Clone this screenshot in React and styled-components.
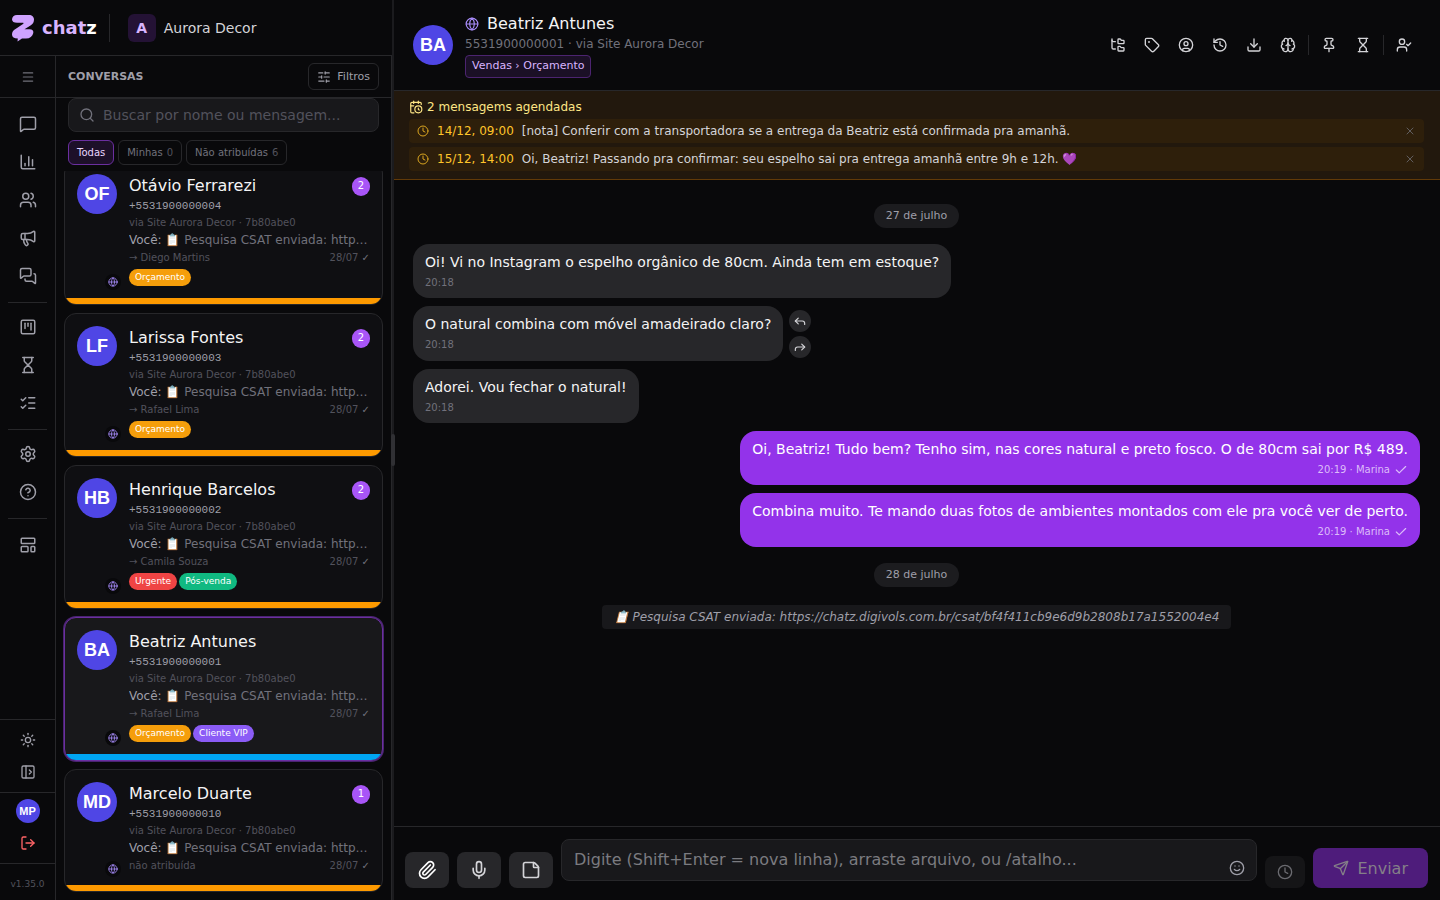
import React from "react";
import styled, { createGlobalStyle, css } from "styled-components";
import {
  Brain,
  CalendarClock,
  ChartColumn,
  Check,
  CircleHelp,
  CircleUser,
  Clock,
  Download,
  FolderTree,
  Forward,
  Globe,
  History,
  Hourglass,
  LayoutTemplate,
  ListChecks,
  LogOut,
  Megaphone,
  Menu,
  MessageSquare,
  MessagesSquare,
  Mic,
  PanelLeftOpen,
  Paperclip,
  Pin,
  Reply,
  Search,
  Send,
  Settings,
  SlidersHorizontal,
  Smile,
  SquareKanban,
  StickyNote,
  Sun,
  Tag,
  UserCheck,
  Users,
  X,
} from "lucide-react";

const colors = {
  bg: "#09090b",
  card: "#0f0f12",
  cardActive: "#18181b",
  line: "#27272a",
  text: "#f4f4f5",
  soft: "#d4d4d8",
  muted: "#9f9fa9",
  dim: "#71717b",
  faint: "#52525c",
  purple: "#9333ea",
  indigo: "#4f46e5",
  orange: "#fe9a00",
  blue: "#00a6f4",
};

const GlobalStyle = createGlobalStyle`
  * {
    box-sizing: border-box;
  }

  body {
    margin: 0;
    background: ${colors.bg};
    color: ${colors.text};
    font-family: "DejaVu Sans", sans-serif;
    font-size: 14px;
    line-height: 20px;
  }

  button,
  input,
  textarea {
    font-family: inherit;
    color: inherit;
    margin: 0;
  }

  button {
    display: flex;
    align-items: center;
    justify-content: center;
    padding: 0;
    border: 0;
    background: none;
    cursor: pointer;
  }

  a {
    color: inherit;
    text-decoration: none;
  }

  h1, h2, p, ul {
    margin: 0;
    padding: 0;
    font-size: inherit;
    font-weight: normal;
  }

  svg {
    flex-shrink: 0;
  }
`;

const ellipsis = css`
  overflow: hidden;
  white-space: nowrap;
  text-overflow: ellipsis;
`;

const Page = styled.div`
  display: flex;
  height: 100vh;
`;

const Sidebar = styled.div`
  display: flex;
  flex-direction: column;
  flex: 0 0 392px;
  min-width: 0;
`;

const BrandBar = styled.header`
  display: flex;
  align-items: center;
  flex: 0 0 56px;
  padding: 0 12px;
  border-bottom: 1px solid ${colors.line};
`;

const Brand = styled.a`
  display: flex;
  align-items: center;
  gap: 8px;
  padding-right: 12px;
  margin-right: 18px;
  height: 28px;
  border-right: 1px solid ${colors.line};
  font-size: 18px;
  font-weight: bold;
  color: #d8b4fe;

  b {
    color: #fff;
  }
`;

const OrgBadge = styled.span`
  display: flex;
  align-items: center;
  justify-content: center;
  width: 28px;
  height: 28px;
  margin-right: 8px;
  border-radius: 6px;
  background: #241235;
  color: #d8b4fe;
  font-weight: bold;
`;

const OrgName = styled.span`
  color: ${colors.soft};
`;

const SidebarBody = styled.div`
  display: flex;
  flex: 1;
  min-height: 0;
`;

const Rail = styled.nav`
  display: flex;
  flex-direction: column;
  flex: 0 0 56px;
  border-right: 1px solid ${colors.line};
  color: ${colors.muted};
`;

const RailToggle = styled.button`
  height: 42px;
  border-bottom: 1px solid ${colors.line};
  color: ${colors.dim};
`;

const RailScroll = styled.div`
  flex: 1;
  padding: 2px 8px;
`;

const RailGroup = styled.div`
  display: flex;
  flex-direction: column;
  gap: 2px;
  padding: 6px 0 8px;

  & + & {
    border-top: 1px solid ${colors.line};
  }

  &:last-child {
    padding-top: 8px;
  }
`;

const RailLink = styled.a`
  display: flex;
  align-items: center;
  justify-content: center;
  height: 36px;
  border-radius: 8px;
`;

const RailFooter = styled.div`
  display: flex;
  flex-direction: column;
  align-items: center;
  gap: ${({ $gap = 0 }) => $gap}px;
  padding: ${({ $top = 4 }) => $top}px 0 4px;
  border-top: 1px solid ${colors.line};
`;

const RailButton = styled.button`
  width: 32px;
  height: 32px;
  color: ${({ $danger }) => ($danger ? "#ff6467" : "inherit")};
`;

const Version = styled.div`
  height: 37px;
  border-top: 1px solid ${colors.line};
  color: ${colors.faint};
  font-size: 9px;
  line-height: 40px;
  text-align: center;
`;

const Avatar = styled.div`
  display: flex;
  align-items: center;
  justify-content: center;
  flex-shrink: 0;
  width: ${({ $size = 40 }) => $size}px;
  height: ${({ $size = 40 }) => $size}px;
  border-radius: 50%;
  background: ${colors.indigo};
  color: #fff;
  font-family: "Liberation Sans", sans-serif;
  font-size: ${({ $size = 40 }) => ($size < 40 ? 11 : 18)}px;
  font-weight: bold;
`;

const ListPane = styled.section`
  display: flex;
  flex-direction: column;
  flex: 1;
  min-width: 0;
  border-right: 1px solid ${colors.line};
`;

const ListHeader = styled.div`
  display: flex;
  align-items: center;
  justify-content: space-between;
  flex: 0 0 42px;
  padding: 0 12px;
  border-bottom: 1px solid ${colors.line};
`;

const ListTitle = styled.h2`
  color: ${colors.muted};
  font-size: 11px;
  font-weight: bold;
  text-transform: uppercase;
`;

const FilterButton = styled.button`
  gap: 6px;
  height: 27px;
  padding: 0 8px;
  border: 1px solid ${colors.line};
  border-radius: 6px;
  color: ${colors.muted};
  font-size: 11px;
`;

const SearchBox = styled.label`
  display: flex;
  align-items: center;
  gap: 8px;
  flex: 0 0 34px;
  margin: 0 12px;
  padding: 0 10px;
  border: 1px solid ${colors.line};
  border-radius: 8px;
  background: ${colors.cardActive};
  color: ${colors.dim};

  input {
    flex: 1;
    min-width: 0;
    padding: 0;
    border: 0;
    outline: 0;
    background: none;
    font-size: 14px;
  }

  input::placeholder {
    color: ${colors.faint};
  }
`;

const Tabs = styled.div`
  display: flex;
  gap: 4px;
  padding: 8px 12px 6px;
`;

const TabButton = styled.button`
  gap: 4px;
  height: 25px;
  padding: 0 8px;
  border: 1px solid ${({ $active }) => ($active ? "#6b2fa0" : colors.line)};
  border-radius: 6px;
  background: ${({ $active }) => ($active ? "#1d1029" : "transparent")};
  color: ${({ $active }) => ($active ? "#e9d5ff" : colors.dim)};
  font-size: 10px;

  span {
    color: ${colors.faint};
  }
`;

// the list is scrolled to its end
const CardList = styled.div`
  display: flex;
  flex-direction: column;
  justify-content: flex-end;
  gap: 8px;
  flex: 1;
  min-height: 0;
  padding: 0 8px 8px;
  overflow: hidden;
`;

const Card = styled.article`
  flex-shrink: 0;
  overflow: hidden;
  border: 1px solid ${({ $active }) => ($active ? "#6b2fa0" : colors.line)};
  border-radius: 12px;
  background: ${({ $active }) => ($active ? colors.cardActive : colors.card)};
  box-shadow: ${({ $active }) => ($active ? "0 0 0 1px #4a2470" : "none")};
`;

const CardBody = styled.div`
  display: flex;
  gap: 12px;
  padding: 12px;
`;

const CardAvatar = styled.div`
  position: relative;
`;

const ChannelBadge = styled.span`
  position: absolute;
  right: -4px;
  bottom: -4px;
  display: flex;
  align-items: center;
  justify-content: center;
  width: 16px;
  height: 16px;
  border-radius: 50%;
  background: ${colors.bg};
  color: #a78bfa;
`;

const CardInfo = styled.div`
  flex: 1;
  min-width: 0;
`;

const CardName = styled.div`
  display: flex;
  align-items: center;
  justify-content: space-between;
  font-size: 16px;
  line-height: 24px;
`;

const Unread = styled.span`
  width: 18px;
  height: 19px;
  border-radius: 10px;
  background: #a855f7;
  color: #fff;
  font-size: 10px;
  line-height: 18px;
  text-align: center;
`;

const Phone = styled.div`
  color: ${colors.muted};
  font-family: "Liberation Mono", monospace;
  font-size: 11px;
  line-height: 17px;
`;

const Via = styled.div`
  color: ${colors.faint};
  font-size: 10px;
  line-height: 15px;
`;

const Preview = styled.p`
  ${ellipsis}
  color: ${colors.dim};
  font-size: 12px;
  line-height: 20px;

  span {
    color: ${colors.muted};
  }
`;

const CardMeta = styled.div`
  display: flex;
  justify-content: space-between;
  color: ${colors.faint};
  font-size: 10px;
  line-height: 15px;

  b {
    color: ${colors.dim};
    font-weight: normal;
  }
`;

const Labels = styled.div`
  display: flex;
  gap: 2px;
  margin-top: 4px;
`;

const Label = styled.span`
  padding: 0 6px;
  border-radius: 9px;
  background: ${({ $color }) => $color};
  color: #fff;
  font-size: 9px;
  line-height: 17px;
`;

const StatusBar = styled.div`
  height: 6px;
  background: ${({ $color }) => $color};
`;

const Resizer = styled.div`
  position: relative;
  display: flex;
  align-items: center;
  flex: 0 0 1px;
  z-index: 1;

  &::before {
    content: "";
    position: absolute;
    top: 0;
    bottom: 0;
    left: 0;
    width: 2px;
    background: #1b1b1e;
  }

  &::after {
    content: "";
    position: absolute;
    left: -1px;
    width: 4px;
    height: 32px;
    border-radius: 2px;
    background: #303034;
  }
`;

const Main = styled.main`
  display: flex;
  flex-direction: column;
  flex: 1;
  min-width: 0;
`;

const ChatHeader = styled.header`
  display: flex;
  align-items: center;
  gap: 12px;
  padding: 12px 20px;
  border-bottom: 1px solid ${colors.line};
`;

const ContactInfo = styled.div`
  flex: 1;
  min-width: 0;
`;

const ContactName = styled.h1`
  display: flex;
  align-items: center;
  gap: 8px;
  font-size: 16px;
  line-height: 24px;

  svg {
    color: #a78bfa;
  }
`;

const ContactSub = styled.p`
  color: ${colors.dim};
  font-size: 12px;
  line-height: 16px;
`;

const StageButton = styled.button`
  height: 23px;
  margin-top: 3px;
  padding: 0 6px 2px;
  border: 1px solid #4c2470;
  border-radius: 4px;
  background: #1b1026;
  color: #d8b4fe;
  font-size: 11px;
`;

const Toolbar = styled.div`
  display: flex;
  align-items: center;
  gap: 2px;
  color: ${colors.soft};
`;

const ToolButton = styled.button`
  width: 32px;
  height: 32px;
`;

const ToolDivider = styled.span`
  width: 1px;
  height: 20px;
  margin: 0 2px;
  background: ${colors.line};
`;

const Banner = styled.section`
  display: flex;
  flex-direction: column;
  gap: 4px;
  padding: 8px 16px;
  border-bottom: 1px solid #623a08;
  background: #22180d;
  font-size: 12px;
  line-height: 16px;
`;

const BannerTitle = styled.h2`
  display: flex;
  align-items: center;
  gap: 4px;
  color: #fee685;
`;

const ScheduledRow = styled.div`
  display: flex;
  align-items: center;
  gap: 8px;
  height: 24px;
  padding: 0 8px;
  border-radius: 4px;
  background: #2e1f0b;
  color: ${colors.soft};

  > svg {
    color: #d9a520;
  }

  time {
    color: #ffc52a;
  }

  p {
    ${ellipsis}
    flex: 1;
  }

  button {
    color: ${colors.dim};
  }
`;

const Messages = styled.div`
  display: flex;
  flex-direction: column;
  gap: 8px;
  flex: 1;
  min-height: 0;
  padding: 16px 20px;
  overflow: hidden;
`;

const DayPill = styled.div`
  align-self: center;
  margin: 8px 0;
  padding: 0 12px;
  border-radius: 12px;
  background: #1c1c1f;
  color: ${colors.muted};
  font-size: 11px;
  line-height: 24px;
`;

const MessageRow = styled.div`
  display: flex;
  justify-content: ${({ $out }) => ($out ? "flex-end" : "flex-start")};
`;

const Bubble = styled.div`
  padding: 8px 12px;
  border-radius: 16px;
  background: ${({ $out }) => ($out ? colors.purple : colors.line)};
  color: ${({ $out }) => ($out ? "#fff" : colors.text)};
`;

const BubbleMeta = styled.div`
  display: flex;
  align-items: center;
  justify-content: ${({ $out }) => ($out ? "flex-end" : "flex-start")};
  gap: 4px;
  margin-top: 3px;
  color: ${({ $out }) => ($out ? "#dcbcf9" : colors.dim)};
  font-size: 10px;
  line-height: 15px;
`;

const BubbleActions = styled.div`
  display: flex;
  flex-direction: column;
  gap: 4px;
  padding: 4px 6px 3px;

  button {
    width: 22px;
    height: 22px;
    border-radius: 50%;
    background: ${colors.line};
    color: ${colors.soft};
  }
`;

const SystemNote = styled.div`
  align-self: center;
  margin-top: 2px;
  padding: 0 12px;
  border-radius: 4px;
  background: ${colors.cardActive};
  color: ${colors.muted};
  font-size: 12px;
  font-style: italic;
  line-height: 24px;
`;

const Composer = styled.form`
  display: flex;
  align-items: flex-end;
  gap: 8px;
  padding: 12px;
  border-top: 1px solid ${colors.line};
`;

const AttachButton = styled.button`
  width: 44px;
  height: 36px;
  border-radius: 8px;
  background: ${colors.line};
  color: ${({ $bright }) => ($bright ? "#fff" : colors.soft)};
`;

const InputWrap = styled.div`
  position: relative;
  flex: 1;
  padding-bottom: 7px;

  textarea {
    display: block;
    width: 100%;
    height: 42px;
    padding: 8px 40px 8px 12px;
    border: 1px solid ${colors.line};
    border-radius: 8px;
    outline: 0;
    resize: none;
    background: ${colors.cardActive};
    font-size: 16px;
    line-height: 24px;
  }

  textarea::placeholder {
    color: #7b7b80;
  }
`;

const EmojiButton = styled.button`
  position: absolute;
  right: 8px;
  bottom: 8px;
  width: 24px;
  height: 24px;
  color: ${colors.muted};
`;

const ScheduleButton = styled.button`
  width: 40px;
  height: 32px;
  border-radius: 8px;
  background: #151517;
  color: #6b6b70;
`;

const SendButton = styled.button`
  gap: 8px;
  height: 40px;
  padding: 0 20px;
  border-radius: 8px;
  background: #4e1c7b;
  color: #847f88;
  font-size: 16px;
`;

const Logo = () => (
  <svg width="22" height="28" viewBox="0 0 22 28" aria-hidden="true">
    <path
      d="M5 1H17C20 1 22 3 22 5.500C22 8 21 10 18.500 11.500L12.500 15.200H17.500C20.300 15.200 21.800 16.600 21.300 19C20.500 22.500 18 24.500 14 24.500H10L5.500 27.500L5.800 24.500C2 24.500 0 23 0 20.500C0 18 1.300 16.300 3.500 15L11 10C12 9.200 11.500 8.800 10.500 8.800H5C2 8.800 0 7.500 0 5.500C0 2.800 2 1 5 1Z"
      fill="#cfa3ff"
    />
  </svg>
);

const navGroups = [
  [
    ["Conversas", MessageSquare],
    ["Relatórios", ChartColumn],
    ["Contatos", Users],
    ["Campanhas", Megaphone],
    ["Chat interno", MessagesSquare],
  ],
  [
    ["Kanban", SquareKanban],
    ["Espera", Hourglass],
    ["Tarefas", ListChecks],
  ],
  [
    ["Configurações", Settings],
    ["Ajuda", CircleHelp],
  ],
  [["Modelos", LayoutTemplate]],
];

const budget = { text: "Orçamento", color: "#f59e0b" };

const conversations = [
  {
    initials: "OF",
    name: "Otávio Ferrarezi",
    phone: "+5531900000004",
    agent: "→ Diego Martins",
    unread: 2,
    labels: [budget],
  },
  {
    initials: "LF",
    name: "Larissa Fontes",
    phone: "+5531900000003",
    agent: "→ Rafael Lima",
    unread: 2,
    labels: [budget],
  },
  {
    initials: "HB",
    name: "Henrique Barcelos",
    phone: "+5531900000002",
    agent: "→ Camila Souza",
    unread: 2,
    labels: [
      { text: "Urgente", color: "#ef4444" },
      { text: "Pós-venda", color: "#10b981" },
    ],
  },
  {
    initials: "BA",
    name: "Beatriz Antunes",
    phone: "+5531900000001",
    agent: "→ Rafael Lima",
    labels: [budget, { text: "Cliente VIP", color: "#8b5cf6" }],
    active: true,
  },
  {
    initials: "MD",
    name: "Marcelo Duarte",
    phone: "+5531900000010",
    agent: "não atribuída",
    unread: 1,
    labels: [],
  },
];

const tools = [
  [
    ["Departamento", FolderTree],
    ["Etiquetas", Tag],
    ["Contato", CircleUser],
    ["Histórico", History],
    ["Exportar", Download],
    ["Resumo", Brain],
  ],
  [
    ["Fixar", Pin],
    ["Aguardar", Hourglass],
  ],
  [["Atribuir", UserCheck]],
];

const scheduled = [
  {
    time: "14/12, 09:00",
    text: "[nota] Conferir com a transportadora se a entrega da Beatriz está confirmada pra amanhã.",
  },
  {
    time: "15/12, 14:00",
    text: "Oi, Beatriz! Passando pra confirmar: seu espelho sai pra entrega amanhã entre 9h e 12h. 💜",
  },
];

const messages = [
  {
    text: "Oi! Vi no Instagram o espelho orgânico de 80cm. Ainda tem em estoque?",
    meta: "20:18",
  },
  {
    text: "O natural combina com móvel amadeirado claro?",
    meta: "20:18",
    actions: true,
  },
  { text: "Adorei. Vou fechar o natural!", meta: "20:18" },
  {
    text: "Oi, Beatriz! Tudo bem? Tenho sim, nas cores natural e preto fosco. O de 80cm sai por R$ 489.",
    meta: "20:19 · Marina",
    out: true,
  },
  {
    text: "Combina muito. Te mando duas fotos de ambientes montados com ele pra você ver de perto.",
    meta: "20:19 · Marina",
    out: true,
  },
];

const ConversationCard = ({ item }) => (
  <Card $active={item.active}>
    <CardBody>
      <CardAvatar>
        <Avatar>{item.initials}</Avatar>
        <ChannelBadge>
          <Globe size={10} />
        </ChannelBadge>
      </CardAvatar>
      <CardInfo>
        <CardName>
          {item.name}
          {item.unread && <Unread>{item.unread}</Unread>}
        </CardName>
        <Phone>{item.phone}</Phone>
        <Via>via Site Aurora Decor · 7b80abe0</Via>
        <Preview>
          <span>Você: </span>📋 Pesquisa CSAT enviada:
          https://chatz.digivols.com.br/csat
        </Preview>
        <CardMeta>
          <span>{item.agent}</span>
          <span>
            28/07 <b>✓</b>
          </span>
        </CardMeta>
        {item.labels.length > 0 && (
          <Labels>
            {item.labels.map((label) => (
              <Label key={label.text} $color={label.color}>
                {label.text}
              </Label>
            ))}
          </Labels>
        )}
      </CardInfo>
    </CardBody>
    <StatusBar $color={item.active ? colors.blue : colors.orange} />
  </Card>
);

const Message = ({ text, meta, out, actions }) => (
  <MessageRow $out={out}>
    <Bubble $out={out}>
      <p>{text}</p>
      <BubbleMeta $out={out}>
        {meta}
        {out && <Check size={14} />}
      </BubbleMeta>
    </Bubble>
    {actions && (
      <BubbleActions>
        <button type="button" aria-label="Responder">
          <Reply size={14} />
        </button>
        <button type="button" aria-label="Encaminhar">
          <Forward size={14} />
        </button>
      </BubbleActions>
    )}
  </MessageRow>
);

const App = () => (
  <>
    <GlobalStyle />
    <Page>
      <Sidebar>
        <BrandBar>
          <Brand href="#">
            <Logo />
            <span>
              chat<b>z</b>
            </span>
          </Brand>
          <OrgBadge>A</OrgBadge>
          <OrgName>Aurora Decor</OrgName>
        </BrandBar>
        <SidebarBody>
          <Rail>
            <RailToggle aria-label="Menu">
              <Menu size={14} />
            </RailToggle>
            <RailScroll>
              {navGroups.map((group) => (
                <RailGroup key={group[0][0]}>
                  {group.map(([label, Icon]) => (
                    <RailLink key={label} href="#" aria-label={label}>
                      <Icon size={18} />
                    </RailLink>
                  ))}
                </RailGroup>
              ))}
            </RailScroll>
            <RailFooter>
              <RailButton aria-label="Tema claro">
                <Sun size={16} />
              </RailButton>
              <RailButton aria-label="Expandir">
                <PanelLeftOpen size={16} />
              </RailButton>
            </RailFooter>
            <RailFooter $top={6} $gap={4}>
              <Avatar $size={24}>MP</Avatar>
              <RailButton $danger aria-label="Sair">
                <LogOut size={16} />
              </RailButton>
            </RailFooter>
            <Version>v1.35.0</Version>
          </Rail>
          <ListPane>
            <ListHeader>
              <ListTitle>Conversas</ListTitle>
              <FilterButton>
                <SlidersHorizontal size={14} />
                Filtros
              </FilterButton>
            </ListHeader>
            <SearchBox>
              <Search size={16} />
              <input
                aria-label="Buscar"
                placeholder="Buscar por nome ou mensagem..."
              />
            </SearchBox>
            <Tabs>
              <TabButton $active>Todas</TabButton>
              <TabButton>
                Minhas <span>0</span>
              </TabButton>
              <TabButton>
                Não atribuídas <span>6</span>
              </TabButton>
            </Tabs>
            <CardList>
              {conversations.map((item) => (
                <ConversationCard key={item.phone} item={item} />
              ))}
            </CardList>
          </ListPane>
        </SidebarBody>
      </Sidebar>
      <Resizer />
      <Main>
        <ChatHeader>
          <Avatar>BA</Avatar>
          <ContactInfo>
            <ContactName>
              <Globe size={14} />
              Beatriz Antunes
            </ContactName>
            <ContactSub>5531900000001 · via Site Aurora Decor</ContactSub>
            <StageButton>Vendas › Orçamento</StageButton>
          </ContactInfo>
          <Toolbar>
            {tools.map((group, index) => (
              <React.Fragment key={group[0][0]}>
                {index > 0 && <ToolDivider />}
                {group.map(([label, Icon]) => (
                  <ToolButton key={label} aria-label={label}>
                    <Icon size={16} />
                  </ToolButton>
                ))}
              </React.Fragment>
            ))}
          </Toolbar>
        </ChatHeader>
        <Banner>
          <BannerTitle>
            <CalendarClock size={14} />2 mensagems agendadas
          </BannerTitle>
          {scheduled.map((row) => (
            <ScheduledRow key={row.time}>
              <Clock size={12} />
              <time>{row.time}</time>
              <p>{row.text}</p>
              <button aria-label="Cancelar">
                <X size={12} strokeWidth={1.5} />
              </button>
            </ScheduledRow>
          ))}
        </Banner>
        <Messages>
          <DayPill>27 de julho</DayPill>
          {messages.map((message) => (
            <Message key={message.text} {...message} />
          ))}
          <DayPill>28 de julho</DayPill>
          <SystemNote>
            📋 Pesquisa CSAT enviada:
            https://chatz.digivols.com.br/csat/bf4f411cb9e6d9b2808b17a1552004e4
          </SystemNote>
        </Messages>
        <Composer>
          <AttachButton type="button" $bright aria-label="Anexar">
            <Paperclip size={20} />
          </AttachButton>
          <AttachButton type="button" aria-label="Gravar áudio">
            <Mic size={20} />
          </AttachButton>
          <AttachButton type="button" aria-label="Nota interna">
            <StickyNote size={20} />
          </AttachButton>
          <InputWrap>
            <textarea
              rows={1}
              aria-label="Mensagem"
              placeholder="Digite (Shift+Enter = nova linha), arraste arquivo, ou /atalho..."
            />
            <EmojiButton type="button" aria-label="Emojis">
              <Smile size={16} />
            </EmojiButton>
          </InputWrap>
          <ScheduleButton type="button" aria-label="Agendar">
            <Clock size={16} />
          </ScheduleButton>
          <SendButton type="submit">
            <Send size={16} />
            Enviar
          </SendButton>
        </Composer>
      </Main>
    </Page>
  </>
);

export default App;
